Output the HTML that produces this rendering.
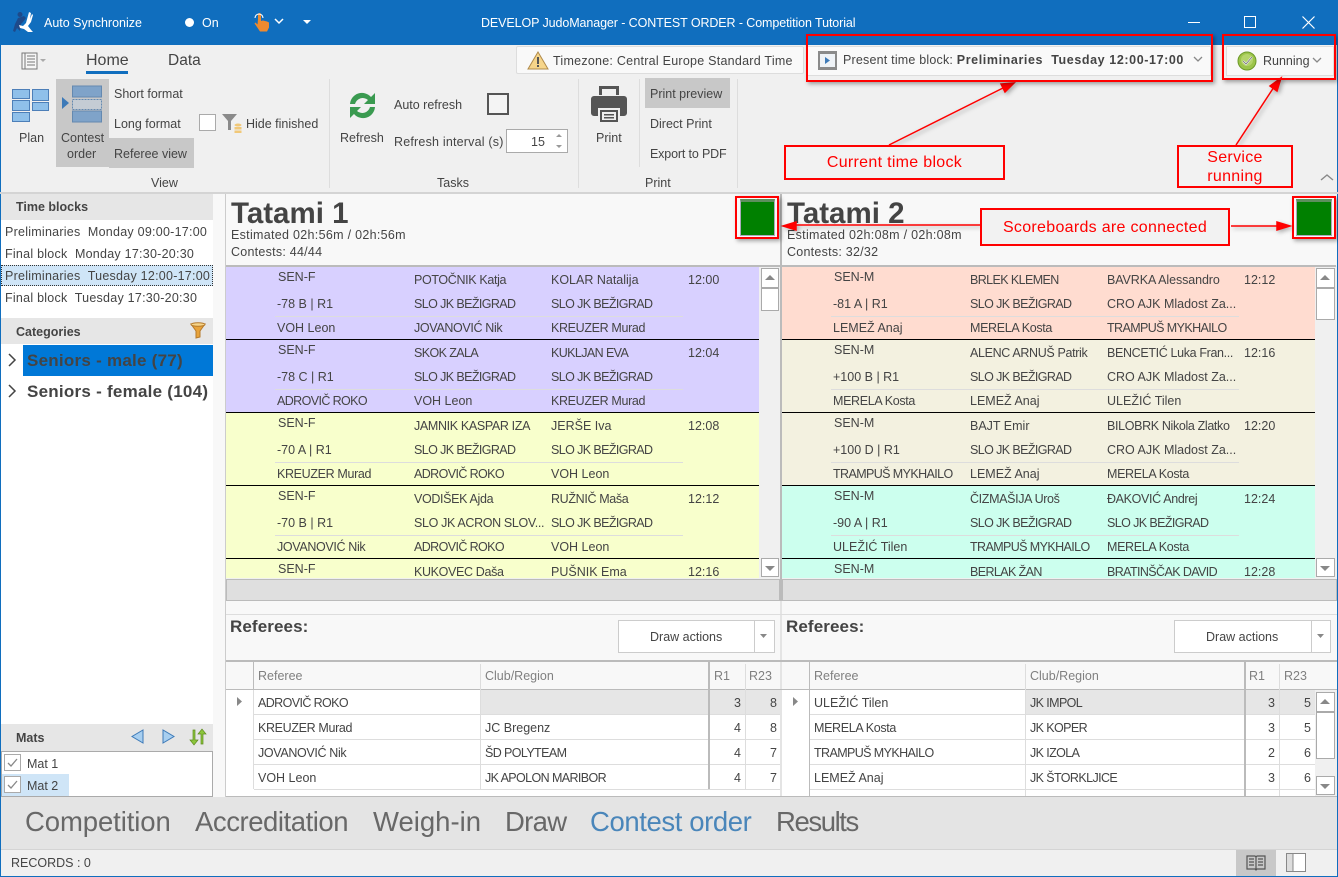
<!DOCTYPE html>
<html><head><meta charset="utf-8"><style>
html,body{margin:0;padding:0}
body{width:1338px;height:877px;overflow:hidden;position:relative;background:#f0f0f0;font:12.5px/14px "Liberation Sans","DejaVu Sans",sans-serif;color:#444}
div,span.a{position:absolute}
.t{position:absolute;white-space:pre;line-height:14px}
.u{letter-spacing:-.6px}
.m{letter-spacing:-.35px}
.d{letter-spacing:.25px}
.b{position:absolute;background:#ccc}
.rb{position:absolute;border:2px solid #f00;box-sizing:border-box;box-shadow:2px 2px 4px rgba(0,0,0,.35)}
.lb{position:absolute;border:2px solid #f00;box-sizing:border-box;background:#f2f2f2;color:#f00;font-size:16px;line-height:19px;letter-spacing:.3px;text-align:center;display:flex;align-items:center;justify-content:center}
.w{color:#fff}
.clip{position:absolute;overflow:hidden}
.row{position:absolute;left:0;height:72px;border-bottom:1px solid #000}
.hr{position:absolute;height:1px;background:#ddd;top:49px}
.gh{position:absolute;color:#808080}
.nav{position:absolute;top:805px;font-size:27.5px;line-height:34px;color:#686868;white-space:pre}
.sec{position:absolute;background:#e6e6e6;font-weight:bold;color:#444}
.sb{position:absolute;background:#fff;border:1px solid #aaa;box-sizing:border-box}
.h1{font-size:29.5px;line-height:32px;font-weight:bold}
.sn{font-size:17px;line-height:17px;font-weight:bold;letter-spacing:.25px}
.rf{font-size:17px;line-height:18px;font-weight:bold;letter-spacing:.1px}
</style></head><body>
<!-- title bar -->
<div style="left:0;top:0;width:1338px;height:45px;background:#106ebe"></div>
<svg style="position:absolute;left:11px;top:11px" width="24" height="24" viewBox="0 0 24 24"><circle cx="9" cy="3.500" r="2.500" fill="#1e4a8a"/><path d="M2 20L4 13L7 7L13 5L15 7L12 11L10 13L9 20L6 17L4 21Z" fill="#1e4a8a"/><path d="M18 1L20 2L19 8L21 3L22 4L20 11L17 15L21 20L22 21L17 21L13 18L9 17L8 14L12 15L15 12Z" fill="#fff"/></svg>
<span class="t w" style="left:44px;top:16px">Auto Synchronize</span>
<div style="left:185px;top:18px;width:9px;height:9px;border-radius:50%;background:#fff"></div>
<span class="t w" style="left:202px;top:16px">On</span>
<svg style="position:absolute;left:252px;top:12px" width="20" height="21" viewBox="0 0 20 21"><path d="M6 7V2.500a1.500 1.500 0 013 0V9l2-.5 2 .5 2 .5 2 1v5l-2 4H8l-4-6-1.500-2 1-1 2 2z" fill="#ef8a2e"/><path d="M3 6a4 4 0 018 0" fill="none" stroke="#fff" stroke-width="1.100"/></svg>
<svg style="position:absolute;left:274px;top:18px" width="12" height="8"><path d="M1 1l4 4 4-4" fill="none" stroke="#fff" stroke-width="1.500"/></svg>
<svg style="position:absolute;left:303px;top:20px" width="10" height="6"><path d="M0 0h8l-4 4z" fill="#fff"/></svg>
<span class="t w" style="left:481px;top:16px;letter-spacing:-.1px">DEVELOP JudoManager - CONTEST ORDER - Competition Tutorial</span>
<div style="left:1188px;top:22px;width:12px;height:1px;background:#fff"></div>
<div style="left:1244px;top:16px;width:12px;height:12px;border:1px solid #fff;box-sizing:border-box"></div>
<svg style="position:absolute;left:1302px;top:16px" width="13" height="13"><path d="M.5.500l12 12M12.500.500l-12 12" stroke="#fff" stroke-width="1.200"/></svg>
<div style="left:0;top:45px;width:1px;height:832px;background:#106ebe"></div>
<div style="left:1337px;top:45px;width:1px;height:832px;background:#106ebe"></div>
<div style="left:0;top:876px;width:1338px;height:1px;background:#106ebe"></div>

<!-- ribbon -->
<svg style="position:absolute;left:21px;top:52px" width="26" height="18"><rect x="1" y="1" width="15" height="16" fill="#f6f6f6" stroke="#777"/><path d="M4 1v16M6 4h8M6 7h8M6 10h8M6 13h8" stroke="#777"/><path d="M19 7h6l-3 3z" fill="#aaa"/></svg>
<span class="t" style="left:86px;top:52px;font-size:16px;line-height:18px">Home</span>
<div style="left:86px;top:71px;width:42px;height:3px;background:#106ebe"></div>
<span class="t" style="left:168px;top:52px;font-size:15.500px;line-height:18px">Data</span>

<svg style="position:absolute;left:11px;top:87px" width="40" height="36"><g fill="#8fc0ea" stroke="#4d7fb8"><rect x="1.500" y="2.500" width="17" height="9"/><rect x="21.500" y="2.500" width="16" height="11"/><rect x="1.500" y="13.500" width="17" height="10"/><rect x="21.500" y="15.500" width="16" height="8"/><rect x="1.500" y="25.500" width="17" height="9"/></g></svg>
<span class="t" style="left:19px;top:131px">Plan</span>
<div style="left:56px;top:79px;width:53px;height:88px;background:#c8c8c8"></div>
<svg style="position:absolute;left:61px;top:85px" width="42" height="38"><path d="M1 12l7 6-7 6z" fill="#3d7ab8"/><rect x="11.500" y="1" width="29" height="11" fill="#7fa3c9" stroke="#6489b0"/><rect x="11.500" y="14.500" width="29" height="10" fill="#c4ccd4" stroke="#6489b0" stroke-dasharray="2 1"/><rect x="11.500" y="26" width="29" height="11" fill="#7fa3c9" stroke="#6489b0"/></svg>
<span class="t" style="left:61px;top:131px">Contest</span>
<span class="t" style="left:67px;top:147px">order</span>
<span class="t" style="left:114px;top:87px">Short format</span>
<span class="t" style="left:114px;top:117px">Long format</span>
<div style="left:109px;top:138px;width:85px;height:30px;background:#c8c8c8"></div>
<span class="t" style="left:114px;top:147px">Referee view</span>
<div style="left:199px;top:114px;width:17px;height:17px;background:#fff;border:1px solid #aaa;box-sizing:border-box"></div>
<svg style="position:absolute;left:221px;top:113px" width="22" height="21"><path d="M1 1h15l-6 7v9h-3v-9z" fill="#8a8a8a"/><ellipse cx="17" cy="12" rx="3.500" ry="1.500" fill="#f1c878"/><rect x="13.500" y="14" width="7" height="2.500" fill="#f1c878"/><rect x="13.500" y="17.500" width="7" height="2.500" fill="#f1c878"/></svg>
<span class="t" style="left:246px;top:117px">Hide finished</span>
<span class="t" style="left:151px;top:176px">View</span>
<div class="b" style="left:329px;top:79px;width:1px;height:109px;background:#ddd"></div>

<svg style="position:absolute;left:346px;top:89px" width="33" height="33" viewBox="0 0 33 33"><path d="M4 15a12 12 0 0121-7l4-4v11H18l4-4a8 8 0 00-13 4z" fill="#3a9a50"/><path d="M29 18a12 12 0 01-21 7l-4 4V18h11l-4 4a8 8 0 0013-4z" fill="#3a9a50"/></svg>
<span class="t" style="left:340px;top:131px">Refresh</span>
<span class="t" style="left:394px;top:98px">Auto refresh</span>
<div style="left:487px;top:93px;width:22px;height:22px;border:2px solid #555;box-sizing:border-box;background:#f4f4f4"></div>
<span class="t" style="left:394px;top:135px;letter-spacing:.2px">Refresh interval (s)</span>
<div style="left:506px;top:129px;width:62px;height:24px;background:#fff;border:1px solid #aaa;box-sizing:border-box"></div>
<span class="t" style="left:531px;top:135px">15</span>
<svg style="position:absolute;left:553px;top:133px" width="12" height="16"><path d="M3 4l3-3 3 3zM3 12l3 3 3-3z" fill="#999"/></svg>
<span class="t" style="left:437px;top:176px">Tasks</span>
<div class="b" style="left:578px;top:79px;width:1px;height:109px;background:#ddd"></div>

<svg style="position:absolute;left:590px;top:84px" width="38" height="40" viewBox="0 0 38 40"><path d="M9 2h20v9H26V5H12v6H9z" fill="#555"/><path d="M4 12h30a3 3 0 013 3v14a3 3 0 01-3 3h-4v-8H8v8H4a3 3 0 01-3-3V15a3 3 0 013-3z" fill="#555"/><path d="M10 26h18v12H10z" fill="#555"/><path d="M12 28h14v8H12z" fill="#f0f0f0"/><path d="M14 30h10v1.500H14zM14 33h10v1.500H14z" fill="#555"/></svg>
<span class="t" style="left:596px;top:131px">Print</span>
<div class="b" style="left:639px;top:79px;width:1px;height:88px;background:#ddd"></div>
<div style="left:645px;top:78px;width:85px;height:30px;background:#c8c8c8"></div>
<span class="t" style="left:650px;top:87px">Print preview</span>
<span class="t" style="left:650px;top:117px">Direct Print</span>
<span class="t" style="left:650px;top:147px;letter-spacing:-.15px">Export to PDF</span>
<span class="t" style="left:645px;top:176px">Print</span>
<div class="b" style="left:737px;top:79px;width:1px;height:109px;background:#ddd"></div>

<!-- timezone etc -->
<div style="left:516px;top:46px;width:288px;height:28px;background:#f9f9f9;border:1px solid #ddd;border-radius:2px;box-sizing:border-box"></div>
<svg style="position:absolute;left:527px;top:51px" width="22" height="19"><path d="M11 1l10 17H1z" fill="#f6d58a" stroke="#b08a4a"/><rect x="10" y="6" width="2" height="7" fill="#555"/><rect x="10" y="14" width="2" height="2" fill="#555"/></svg>
<span class="t d" style="left:553px;top:54px">Timezone: Central Europe Standard Time</span>
<div style="left:807px;top:46px;width:404px;height:30px;background:#f9f9f9;border:1px solid #ddd;box-sizing:border-box"></div>
<svg style="position:absolute;left:818px;top:51px" width="19" height="19"><rect width="19" height="19" fill="#8a8a8a"/><rect x="2" y="3" width="15" height="13" fill="#eef2f6"/><path d="M7 6l5 3.500-5 3.500z" fill="#3d7ab8"/></svg>
<span class="t" style="left:843px;top:53px;letter-spacing:.2px">Present time block: <b style="letter-spacing:.6px">Preliminaries  Tuesday 12:00-17:00</b></span>
<svg style="position:absolute;left:1193px;top:56px" width="10" height="7"><path d="M1 1l4 4 4-4" fill="none" stroke="#888" stroke-width="1.300"/></svg>
<div style="left:1226px;top:46px;width:108px;height:30px;background:#f9f9f9;border:1px solid #ddd;box-sizing:border-box"></div>
<svg style="position:absolute;left:1237px;top:51px" width="20" height="20"><circle cx="10" cy="10" r="9" fill="#9cc44a" stroke="#6d9a2a"/><circle cx="10" cy="9" r="6" fill="#b4d46a"/><path d="M6 10l3 3 6-7" fill="none" stroke="#e8e8e8" stroke-width="2"/><path d="M6 10l3 3 6-7" fill="none" stroke="#666" stroke-width=".6"/></svg>
<span class="t" style="left:1263px;top:54px">Running</span>
<svg style="position:absolute;left:1312px;top:57px" width="10" height="7"><path d="M1 1l4 4 4-4" fill="none" stroke="#888" stroke-width="1.300"/></svg>
<svg style="position:absolute;left:1320px;top:173px" width="14" height="9"><path d="M1 7l6-5 6 5" fill="none" stroke="#888" stroke-width="1.400"/></svg>
<div style="left:0;top:192px;width:1338px;height:2px;background:#d4d4d4"></div>

<!-- left panel -->
<div style="left:1px;top:194px;width:212px;height:603px;background:#fff"></div>
<div style="left:213px;top:194px;width:13px;height:603px;background:#f8f8f8"></div>
<div class="sec" style="left:1px;top:194px;width:212px;height:26px"><span class="t" style="left:15px;top:6px">Time blocks</span></div>
<span class="t d" style="left:5px;top:225px">Preliminaries  Monday 09:00-17:00</span>
<span class="t d" style="left:5px;top:247px">Final block  Monday 17:30-20:30</span>
<div style="left:1px;top:265px;width:212px;height:21px;background:#cfe5f7;outline:1px dotted #333;outline-offset:-1px"></div>
<span class="t d" style="left:5px;top:269px">Preliminaries  Tuesday 12:00-17:00</span>
<span class="t d" style="left:5px;top:291px">Final block  Tuesday 17:30-20:30</span>
<div class="sec" style="left:1px;top:318px;width:212px;height:26px"><span class="t" style="left:15px;top:7px">Categories</span></div>
<svg style="position:absolute;left:190px;top:322px" width="16" height="17"><path d="M1 2h14l-5 7v6l-4 1V9z" fill="#e8a33a" stroke="#b5792a"/><ellipse cx="8" cy="2.500" rx="7" ry="1.800" fill="#f6d58a" stroke="#b5792a"/></svg>
<div style="left:23px;top:345px;width:190px;height:31px;background:#0078d7"></div>
<svg style="position:absolute;left:7px;top:353px" width="10" height="14"><path d="M2 1l6 6-6 6" fill="none" stroke="#444" stroke-width="1.500"/></svg>
<span class="t sn" style="left:27px;top:352px">Seniors - male (77)</span>
<svg style="position:absolute;left:7px;top:384px" width="10" height="14"><path d="M2 1l6 6-6 6" fill="none" stroke="#444" stroke-width="1.500"/></svg>
<span class="t sn" style="left:27px;top:383px">Seniors - female (104)</span>
<div class="sec" style="left:1px;top:724px;width:212px;height:27px"><span class="t" style="left:15px;top:7px">Mats</span></div>
<svg style="position:absolute;left:130px;top:728px" width="78" height="18"><path d="M13 2v13L2 8.500z" fill="#a8cff0" stroke="#3d7ab8"/><path d="M33 2v13l11-6.500z" fill="#a8cff0" stroke="#3d7ab8"/><path d="M63 2v10h-3l4 5 4-5h-3V2zM71 16V6h-3l4-5 4 5h-3v10z" fill="#8cc63c" stroke="#5d8a1e" stroke-width=".7"/></svg>
<div style="left:1px;top:751px;width:212px;height:46px;background:#fff;border:1px solid #aaa;box-sizing:border-box"></div>
<div style="left:2px;top:774px;width:67px;height:22px;background:#cfe5f7"></div>
<div style="left:4px;top:754px;width:17px;height:17px;border:1px solid #aaa;box-sizing:border-box;background:#fff"></div>
<div style="left:4px;top:776px;width:17px;height:17px;border:1px solid #aaa;box-sizing:border-box;background:#fff"></div>
<svg style="position:absolute;left:4px;top:754px" width="17" height="40"><path d="M4 9l3 3 6-7M4 31l3 3 6-7" fill="none" stroke="#888" stroke-width="1.300"/></svg>
<span class="t" style="left:27px;top:757px">Mat 1</span>
<span class="t" style="left:27px;top:779px">Mat 2</span>

<!-- tatami headers -->
<div style="left:226px;top:194px;width:555px;height:72px;background:#f8f8f8"></div>
<div style="left:782px;top:194px;width:555px;height:72px;background:#f8f8f8"></div>
<div style="left:225px;top:194px;width:1px;height:603px;background:#ccc"></div>
<div style="left:780px;top:194px;width:2px;height:603px;background:#bbb"></div>
<span class="t h1" style="left:231px;top:198px">Tatami 1</span>
<span class="t" style="left:231px;top:228px;letter-spacing:.3px">Estimated 02h:56m / 02h:56m</span>
<span class="t d" style="left:231px;top:245px">Contests: 44/44</span>
<span class="t h1" style="left:787px;top:198px">Tatami 2</span>
<span class="t" style="left:787px;top:228px;letter-spacing:.3px">Estimated 02h:08m / 02h:08m</span>
<span class="t d" style="left:787px;top:245px">Contests: 32/32</span>
<div style="left:740px;top:199px;width:35px;height:37px;background:#008000;box-sizing:border-box;border:1px solid #aab;border-top:3px solid #5d8f5d"></div>
<div style="left:1296px;top:199px;width:36px;height:37px;background:#008000;box-sizing:border-box;border:1px solid #aab;border-top:3px solid #5d8f5d"></div>
<div style="left:226px;top:265px;width:1110px;height:2px;background:#bbb"></div>

<!-- tatami 1 rows -->
<div style="left:759px;top:267px;width:21px;height:311px;background:#f0f0f0"></div>
<div style="left:1315px;top:267px;width:22px;height:311px;background:#f0f0f0"></div>
<div class="clip" style="left:226px;top:267px;width:533px;height:311px;background:#f8ffcc">
<div class="row" style="top:0;width:533px;background:#d8d0ff"><div class="hr" style="left:49px;width:408px"></div>
<span class="t" style="left:52px;top:3px">SEN-F</span><span class="t m" style="left:188px;top:6px">POTOČNIK Katja</span><span class="t" style="left:325px;top:6px">KOLAR Natalija</span><span class="t" style="left:462px;top:6px">12:00</span>
<span class="t" style="left:51px;top:30px">-78 B | R1</span><span class="t u" style="left:188px;top:30px">SLO JK BEŽIGRAD</span><span class="t u" style="left:325px;top:30px">SLO JK BEŽIGRAD</span>
<span class="t" style="left:51px;top:54px">VOH Leon</span><span class="t m" style="left:188px;top:54px">JOVANOVIĆ Nik</span><span class="t m" style="left:325px;top:54px">KREUZER Murad</span></div>
<div class="row" style="top:73px;width:533px;background:#d8d0ff"><div class="hr" style="left:49px;width:408px"></div>
<span class="t" style="left:52px;top:3px">SEN-F</span><span class="t u" style="left:188px;top:6px">SKOK ZALA</span><span class="t u" style="left:325px;top:6px">KUKLJAN EVA</span><span class="t" style="left:462px;top:6px">12:04</span>
<span class="t" style="left:51px;top:30px">-78 C | R1</span><span class="t u" style="left:188px;top:30px">SLO JK BEŽIGRAD</span><span class="t u" style="left:325px;top:30px">SLO JK BEŽIGRAD</span>
<span class="t u" style="left:51px;top:54px">ADROVIČ ROKO</span><span class="t" style="left:188px;top:54px">VOH Leon</span><span class="t m" style="left:325px;top:54px">KREUZER Murad</span></div>
<div class="row" style="top:146px;width:533px;background:#f8ffcc"><div class="hr" style="left:49px;width:408px"></div>
<span class="t" style="left:52px;top:3px">SEN-F</span><span class="t m" style="left:188px;top:6px">JAMNIK KASPAR IZA</span><span class="t" style="left:325px;top:6px">JERŠE Iva</span><span class="t" style="left:462px;top:6px">12:08</span>
<span class="t" style="left:51px;top:30px">-70 A | R1</span><span class="t u" style="left:188px;top:30px">SLO JK BEŽIGRAD</span><span class="t u" style="left:325px;top:30px">SLO JK BEŽIGRAD</span>
<span class="t m" style="left:51px;top:54px">KREUZER Murad</span><span class="t u" style="left:188px;top:54px">ADROVIČ ROKO</span><span class="t" style="left:325px;top:54px">VOH Leon</span></div>
<div class="row" style="top:219px;width:533px;background:#f8ffcc"><div class="hr" style="left:49px;width:408px"></div>
<span class="t" style="left:52px;top:3px">SEN-F</span><span class="t m" style="left:188px;top:6px">VODIŠEK Ajda</span><span class="t m" style="left:325px;top:6px">RUŽNIČ Maša</span><span class="t" style="left:462px;top:6px">12:12</span>
<span class="t" style="left:51px;top:30px">-70 B | R1</span><span class="t m" style="left:188px;top:30px">SLO JK ACRON SLOV...</span><span class="t u" style="left:325px;top:30px">SLO JK BEŽIGRAD</span>
<span class="t m" style="left:51px;top:54px">JOVANOVIĆ Nik</span><span class="t u" style="left:188px;top:54px">ADROVIČ ROKO</span><span class="t" style="left:325px;top:54px">VOH Leon</span></div>
<div class="row" style="top:292px;width:533px;background:#f8ffcc">
<span class="t" style="left:52px;top:3px">SEN-F</span><span class="t m" style="left:188px;top:6px">KUKOVEC Daša</span><span class="t" style="left:325px;top:6px">PUŠNIK Ema</span><span class="t" style="left:462px;top:6px">12:16</span></div>
</div>

<!-- tatami 2 rows -->
<div class="clip" style="left:782px;top:267px;width:533px;height:311px;background:#ccffee">
<div class="row" style="top:0;width:533px;background:#ffdcd0"><div class="hr" style="left:49px;width:408px"></div>
<span class="t" style="left:52px;top:3px">SEN-M</span><span class="t u" style="left:188px;top:6px">BRLEK KLEMEN</span><span class="t" style="left:325px;top:6px;letter-spacing:-.1px">BAVRKA Alessandro</span><span class="t" style="left:462px;top:6px">12:12</span>
<span class="t" style="left:51px;top:30px">-81 A | R1</span><span class="t u" style="left:188px;top:30px">SLO JK BEŽIGRAD</span><span class="t" style="left:325px;top:30px">CRO AJK Mladost Za...</span>
<span class="t" style="left:51px;top:54px">LEMEŽ Anaj</span><span class="t m" style="left:188px;top:54px">MERELA Kosta</span><span class="t u" style="left:325px;top:54px">TRAMPUŠ MYKHAILO</span></div>
<div class="row" style="top:73px;width:533px;background:#f3f1e0"><div class="hr" style="left:49px;width:408px"></div>
<span class="t" style="left:52px;top:3px">SEN-M</span><span class="t m" style="left:188px;top:6px">ALENC ARNUŠ Patrik</span><span class="t m" style="left:325px;top:6px">BENCETIĆ Luka Fran...</span><span class="t" style="left:462px;top:6px">12:16</span>
<span class="t" style="left:51px;top:30px">+100 B | R1</span><span class="t u" style="left:188px;top:30px">SLO JK BEŽIGRAD</span><span class="t" style="left:325px;top:30px">CRO AJK Mladost Za...</span>
<span class="t m" style="left:51px;top:54px">MERELA Kosta</span><span class="t" style="left:188px;top:54px">LEMEŽ Anaj</span><span class="t" style="left:325px;top:54px">ULEŽIĆ Tilen</span></div>
<div class="row" style="top:146px;width:533px;background:#f3f1e0"><div class="hr" style="left:49px;width:408px"></div>
<span class="t" style="left:52px;top:3px">SEN-M</span><span class="t" style="left:188px;top:6px">BAJT Emir</span><span class="t m" style="left:325px;top:6px">BILOBRK Nikola Zlatko</span><span class="t" style="left:462px;top:6px">12:20</span>
<span class="t" style="left:51px;top:30px">+100 D | R1</span><span class="t u" style="left:188px;top:30px">SLO JK BEŽIGRAD</span><span class="t" style="left:325px;top:30px">CRO AJK Mladost Za...</span>
<span class="t u" style="left:51px;top:54px">TRAMPUŠ MYKHAILO</span><span class="t" style="left:188px;top:54px">LEMEŽ Anaj</span><span class="t m" style="left:325px;top:54px">MERELA Kosta</span></div>
<div class="row" style="top:219px;width:533px;background:#ccffee"><div class="hr" style="left:49px;width:408px"></div>
<span class="t" style="left:52px;top:3px">SEN-M</span><span class="t m" style="left:188px;top:6px">ČIZMAŠIJA Uroš</span><span class="t m" style="left:325px;top:6px">ĐAKOVIĆ Andrej</span><span class="t" style="left:462px;top:6px">12:24</span>
<span class="t" style="left:51px;top:30px">-90 A | R1</span><span class="t u" style="left:188px;top:30px">SLO JK BEŽIGRAD</span><span class="t u" style="left:325px;top:30px">SLO JK BEŽIGRAD</span>
<span class="t" style="left:51px;top:54px">ULEŽIĆ Tilen</span><span class="t u" style="left:188px;top:54px">TRAMPUŠ MYKHAILO</span><span class="t m" style="left:325px;top:54px">MERELA Kosta</span></div>
<div class="row" style="top:292px;width:533px;background:#ccffee">
<span class="t" style="left:52px;top:3px">SEN-M</span><span class="t u" style="left:188px;top:6px">BERLAK ŽAN</span><span class="t u" style="left:325px;top:6px">BRATINŠČAK DAVID</span><span class="t" style="left:462px;top:6px">12:28</span></div>
</div>

<!-- scrollbars -->
<div class="sb" style="left:761px;top:268px;width:18px;height:20px"></div>
<div class="sb" style="left:761px;top:288px;width:18px;height:23px"></div>
<div class="sb" style="left:761px;top:558px;width:18px;height:19px"></div>
<div class="sb" style="left:1316px;top:268px;width:19px;height:20px"></div>
<div class="sb" style="left:1316px;top:288px;width:19px;height:32px"></div>
<div class="sb" style="left:1316px;top:558px;width:19px;height:19px"></div>
<svg style="position:absolute;left:765px;top:274px" width="12" height="7"><path d="M0 6l5-5 5 5z" fill="#888"/></svg>
<svg style="position:absolute;left:765px;top:565px" width="12" height="7"><path d="M0 1l5 5 5-5z" fill="#888"/></svg>
<svg style="position:absolute;left:1320px;top:274px" width="12" height="7"><path d="M0 6l5-5 5 5z" fill="#888"/></svg>
<svg style="position:absolute;left:1320px;top:565px" width="12" height="7"><path d="M0 1l5 5 5-5z" fill="#888"/></svg>
<div style="left:226px;top:579px;width:554px;height:22px;background:#dfdfdf;border:1px solid #bbb;box-sizing:border-box"></div>
<div style="left:782px;top:579px;width:555px;height:22px;background:#dfdfdf;border:1px solid #bbb;box-sizing:border-box"></div>
<div style="left:226px;top:601px;width:1111px;height:196px;background:#f8f8f8"></div>
<div style="left:780px;top:601px;width:2px;height:196px;background:#e4e4e4"></div>
<div style="left:226px;top:614px;width:1111px;height:1px;background:#ddd"></div>

<!-- referees -->
<span class="t rf" style="left:230px;top:618px">Referees:</span>
<span class="t rf" style="left:786px;top:618px">Referees:</span>
<div style="left:618px;top:620px;width:157px;height:33px;background:#fff;border:1px solid #ccc;box-sizing:border-box"></div>
<div style="left:754px;top:620px;width:1px;height:33px;background:#ccc"></div>
<span class="t" style="left:650px;top:630px">Draw actions</span>
<div style="left:1174px;top:620px;width:157px;height:33px;background:#fff;border:1px solid #ccc;box-sizing:border-box"></div>
<div style="left:1311px;top:620px;width:1px;height:33px;background:#ccc"></div>
<span class="t" style="left:1206px;top:630px">Draw actions</span>
<svg style="position:absolute;left:760px;top:634px" width="10" height="5"><path d="M0 0h7l-3.500 4z" fill="#888"/></svg>
<svg style="position:absolute;left:1317px;top:634px" width="10" height="5"><path d="M0 0h7l-3.500 4z" fill="#888"/></svg>

<!-- grids -->
<div style="left:226px;top:660px;width:1111px;height:2px;background:#bbb"></div>
<div style="left:226px;top:689px;width:1111px;height:1px;background:#bbb"></div>
<div style="left:253px;top:660px;width:1px;height:30px;background:#bbb"></div>
<div style="left:809px;top:660px;width:1px;height:137px;background:#bbb"></div>
<div style="left:254px;top:690px;width:526px;height:107px;background:#fff"></div>
<div style="left:810px;top:690px;width:505px;height:107px;background:#fff"></div>
<div style="left:226px;top:690px;width:28px;height:107px;background:#fff"></div>
<div style="left:782px;top:690px;width:27px;height:107px;background:#fff"></div>
<div style="left:253px;top:690px;width:1px;height:99px;background:#ddd"></div>
<div style="left:481px;top:690px;width:227px;height:24px;background:#e6e6e6"></div>
<div style="left:708px;top:690px;width:72px;height:24px;background:#e6e6e6"></div>
<div style="left:1025px;top:690px;width:219px;height:24px;background:#e6e6e6"></div>
<div style="left:1244px;top:690px;width:71px;height:24px;background:#e6e6e6"></div>
<div style="left:254px;top:714px;width:526px;height:1px;background:#ddd"></div>
<div style="left:254px;top:739px;width:526px;height:1px;background:#ddd"></div>
<div style="left:254px;top:764px;width:526px;height:1px;background:#ddd"></div>
<div style="left:254px;top:789px;width:526px;height:1px;background:#ddd"></div>
<div style="left:810px;top:714px;width:505px;height:1px;background:#ddd"></div>
<div style="left:810px;top:739px;width:505px;height:1px;background:#ddd"></div>
<div style="left:810px;top:764px;width:505px;height:1px;background:#ddd"></div>
<div style="left:810px;top:789px;width:505px;height:1px;background:#ddd"></div>
<div style="left:480px;top:664px;width:1px;height:125px;background:#ddd"></div>
<div style="left:708px;top:660px;width:2px;height:129px;background:#bbb"></div>
<div style="left:745px;top:664px;width:1px;height:125px;background:#ddd"></div>
<div style="left:1025px;top:664px;width:1px;height:133px;background:#ddd"></div>
<div style="left:1244px;top:660px;width:2px;height:137px;background:#bbb"></div>
<div style="left:1279px;top:664px;width:1px;height:133px;background:#ddd"></div>
<span class="t gh" style="left:258px;top:669px">Referee</span>
<span class="t gh" style="left:485px;top:669px">Club/Region</span>
<span class="t gh" style="left:714px;top:669px">R1</span>
<span class="t gh" style="left:749px;top:669px">R23</span>
<span class="t gh" style="left:814px;top:669px">Referee</span>
<span class="t gh" style="left:1030px;top:669px">Club/Region</span>
<span class="t gh" style="left:1249px;top:669px">R1</span>
<span class="t gh" style="left:1284px;top:669px">R23</span>
<svg style="position:absolute;left:236px;top:697px" width="7" height="10"><path d="M1 0l5 4.500-5 4.500z" fill="#888"/></svg>
<svg style="position:absolute;left:792px;top:697px" width="7" height="10"><path d="M1 0l5 4.500-5 4.500z" fill="#888"/></svg>

<span class="t u" style="left:258px;top:696px">ADROVIČ ROKO</span><span class="t" style="left:734px;top:696px">3</span><span class="t" style="left:770px;top:696px">8</span>
<span class="t m" style="left:258px;top:721px">KREUZER Murad</span><span class="t" style="left:485px;top:721px">JC Bregenz</span><span class="t" style="left:734px;top:721px">4</span><span class="t" style="left:770px;top:721px">8</span>
<span class="t m" style="left:258px;top:746px">JOVANOVIĆ Nik</span><span class="t u" style="left:485px;top:746px">ŠD POLYTEAM</span><span class="t" style="left:734px;top:746px">4</span><span class="t" style="left:770px;top:746px">7</span>
<span class="t" style="left:258px;top:771px">VOH Leon</span><span class="t u" style="left:485px;top:771px">JK APOLON MARIBOR</span><span class="t" style="left:734px;top:771px">4</span><span class="t" style="left:770px;top:771px">7</span>

<span class="t" style="left:814px;top:696px">ULEŽIĆ Tilen</span><span class="t u" style="left:1030px;top:696px">JK IMPOL</span><span class="t" style="left:1268px;top:696px">3</span><span class="t" style="left:1304px;top:696px">5</span>
<span class="t m" style="left:814px;top:721px">MERELA Kosta</span><span class="t u" style="left:1030px;top:721px">JK KOPER</span><span class="t" style="left:1268px;top:721px">3</span><span class="t" style="left:1304px;top:721px">5</span>
<span class="t u" style="left:814px;top:746px">TRAMPUŠ MYKHAILO</span><span class="t u" style="left:1030px;top:746px">JK IZOLA</span><span class="t" style="left:1268px;top:746px">2</span><span class="t" style="left:1304px;top:746px">6</span>
<span class="t" style="left:814px;top:771px">LEMEŽ Anaj</span><span class="t u" style="left:1030px;top:771px">JK ŠTORKLJICE</span><span class="t" style="left:1268px;top:771px">3</span><span class="t" style="left:1304px;top:771px">6</span>

<div style="left:1315px;top:690px;width:22px;height:107px;background:#f0f0f0"></div>
<div class="sb" style="left:1316px;top:692px;width:19px;height:20px"></div>
<div class="sb" style="left:1316px;top:712px;width:19px;height:47px"></div>
<div class="sb" style="left:1316px;top:776px;width:19px;height:19px"></div>
<svg style="position:absolute;left:1320px;top:698px" width="12" height="7"><path d="M0 6l5-5 5 5z" fill="#888"/></svg>
<svg style="position:absolute;left:1320px;top:783px" width="12" height="7"><path d="M0 1l5 5 5-5z" fill="#888"/></svg>
<div style="left:226px;top:796px;width:1111px;height:1px;background:#bbb"></div>

<!-- bottom nav -->
<div style="left:1px;top:797px;width:1336px;height:52px;background:#e4e4e4"></div>
<div style="left:1px;top:849px;width:1336px;height:1px;background:#d4d4d4"></div>
<div style="left:1px;top:850px;width:1336px;height:26px;background:#f0f0f0"></div>
<span class="nav" style="left:25px;letter-spacing:-.1px">Competition</span>
<span class="nav" style="left:195px;letter-spacing:-.45px">Accreditation</span>
<span class="nav" style="left:373px">Weigh-in</span>
<span class="nav" style="left:505px;letter-spacing:-.7px">Draw</span>
<span class="nav" style="left:590px;color:#4a86ba;letter-spacing:-.4px">Contest order</span>
<span class="nav" style="left:776px;letter-spacing:-1.400px">Results</span>
<span class="t" style="left:11px;top:856px">RECORDS : 0</span>
<div style="left:1236px;top:850px;width:40px;height:26px;background:#c8c8c8"></div>
<svg style="position:absolute;left:1246px;top:854px" width="20" height="18"><path d="M1 2h8l1 1 1-1h8v13h-8l-1 1-1-1H1zM10 3v12M3 5h5M3 8h5M3 11h5M12 5h5M12 8h5M12 11h5" fill="none" stroke="#555" stroke-width="1.200"/></svg>
<svg style="position:absolute;left:1286px;top:853px" width="20" height="19"><rect x=".5" y=".5" width="19" height="18" fill="#fff" stroke="#888"/><rect x="1" y="1" width="6" height="17" fill="#ddd"/><path d="M7 1v17" stroke="#888"/></svg>

<!-- annotations -->
<svg style="position:absolute;left:0;top:0;filter:drop-shadow(2px 2px 2px rgba(0,0,0,.3))" width="1338" height="877">
<g stroke="#f00" stroke-width="1.500" fill="#f00">
<path d="M889 145L1005 87" fill="none"/><path d="M1014 83l-13 1 4 8z"/>
<path d="M1236 145L1274 87" fill="none"/><path d="M1281 78l-11 8 7 5z"/>
<path d="M980 225H795" fill="none"/><path d="M783 226l13-4v8z"/>
<path d="M1231 226H1278" fill="none"/><path d="M1290 226l-13-4v8z"/>
</g></svg>
<div class="rb" style="left:806px;top:34px;width:407px;height:48px"></div>
<div class="rb" style="left:1222px;top:34px;width:114px;height:46px"></div>
<div class="rb" style="left:735px;top:196px;width:44px;height:43px"></div>
<div class="rb" style="left:1292px;top:196px;width:44px;height:43px"></div>
<div class="lb" style="left:784px;top:145px;width:221px;height:35px">Current time block</div>
<div class="lb" style="left:1177px;top:145px;width:116px;height:43px">Service<br>running</div>
<div class="lb" style="left:980px;top:208px;width:250px;height:38px">Scoreboards are connected</div>
</body></html>
